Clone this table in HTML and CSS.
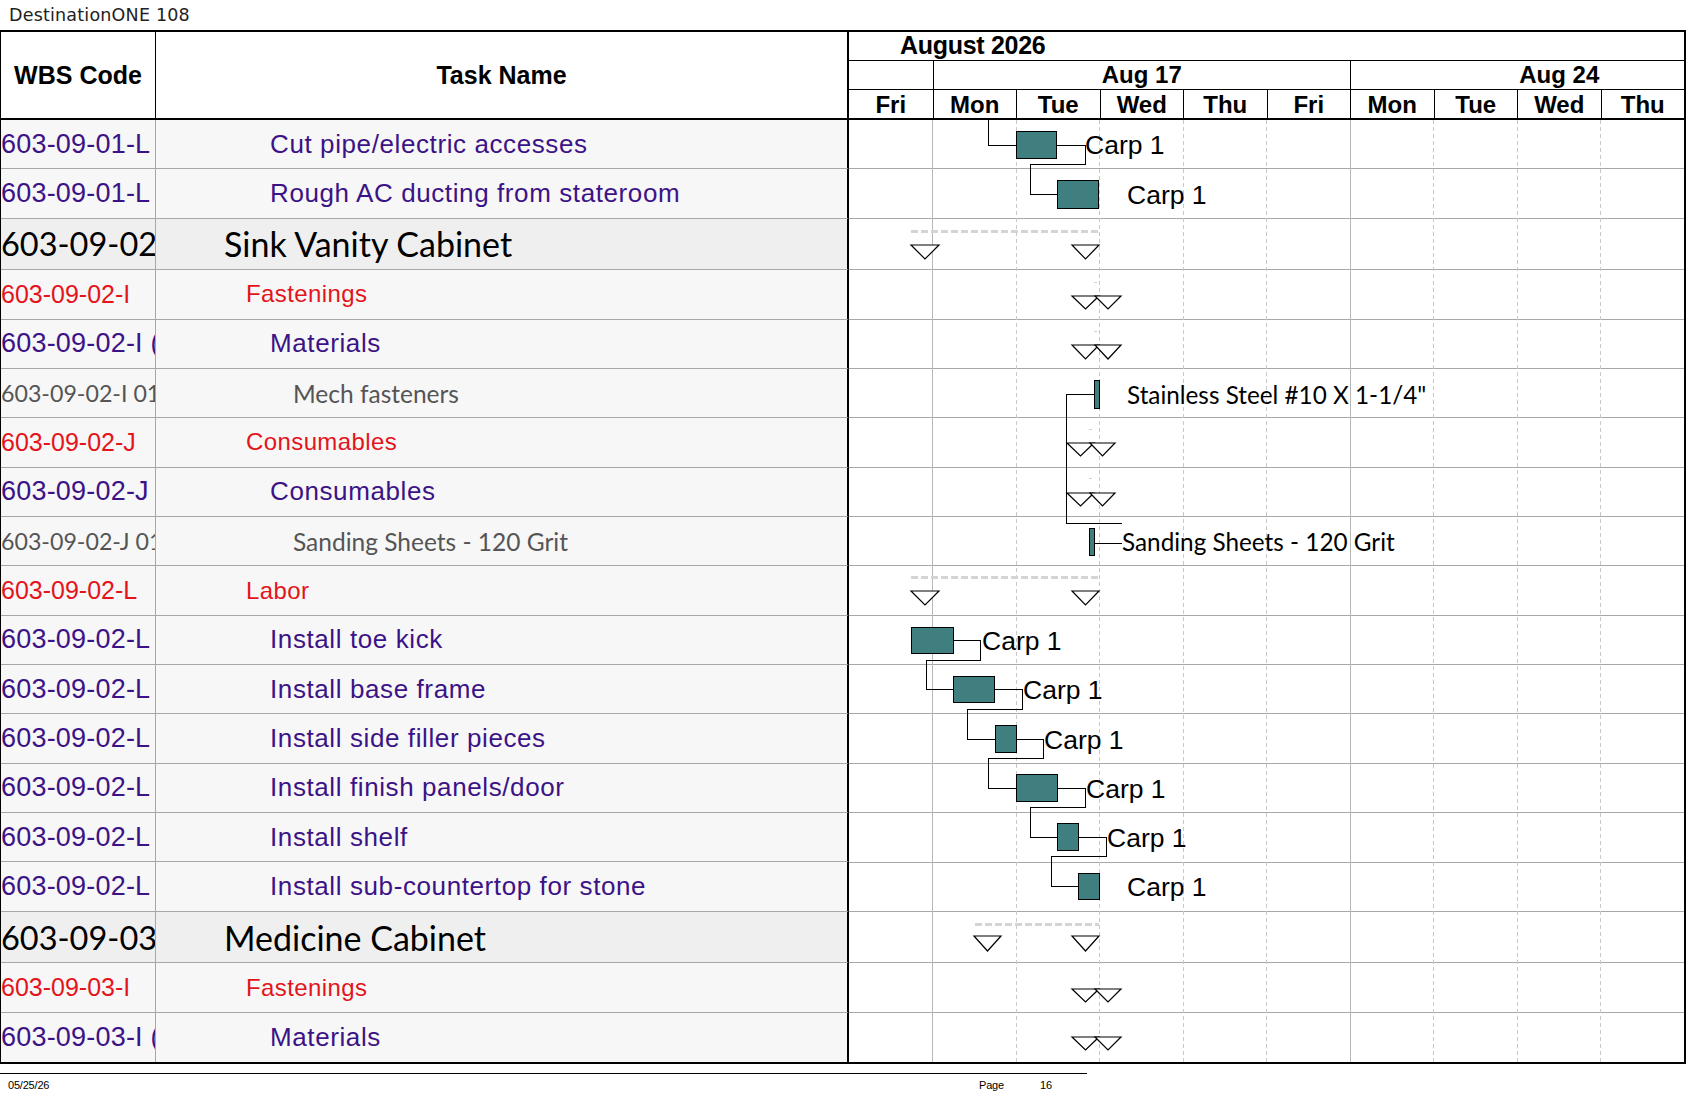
FILE: index.html
```html
<!DOCTYPE html>
<html lang="en">
<head>
<meta charset="utf-8">
<title>DestinationONE 108</title>
<link rel="stylesheet" href="styles.css">
</head>
<body>
<div class="doc-title">DestinationONE 108</div>
<div class="sheet">
  <div class="head">
    <div class="hcell wbs-h">WBS Code</div>
    <div class="hcell task-h">Task Name</div>
    <div class="gantt-h">
      <div class="tier month"><span class="month-label">August 2026</span></div>
      <div class="tier week">
        <div class="wk span1"></div>
        <div class="wk span5">Aug 17</div>
        <div class="wk span5">Aug 24</div>
      </div>
      <div class="tier days">
        <div class="day">Fri</div><div class="day">Mon</div><div class="day">Tue</div><div class="day">Wed</div><div class="day">Thu</div>
        <div class="day">Fri</div><div class="day">Mon</div><div class="day">Tue</div><div class="day">Wed</div><div class="day">Thu</div>
      </div>
    </div>
  </div>
  <div class="body">
    <div class="row blue"><div class="wbs">603-09-01-L</div><div class="task">Cut pipe/electric accesses</div></div>
    <div class="row blue"><div class="wbs">603-09-01-L</div><div class="task">Rough AC ducting from stateroom</div></div>
    <div class="row sum"><div class="wbs">603-09-02</div><div class="task">Sink Vanity Cabinet</div></div>
    <div class="row red"><div class="wbs">603-09-02-I</div><div class="task">Fastenings</div></div>
    <div class="row blue"><div class="wbs">603-09-02-I (01)</div><div class="task">Materials</div></div>
    <div class="row grey"><div class="wbs">603-09-02-I 01.01</div><div class="task">Mech fasteners</div></div>
    <div class="row red"><div class="wbs">603-09-02-J</div><div class="task">Consumables</div></div>
    <div class="row blue"><div class="wbs">603-09-02-J (01)</div><div class="task">Consumables</div></div>
    <div class="row grey"><div class="wbs">603-09-02-J 01.01</div><div class="task">Sanding Sheets - 120 Grit</div></div>
    <div class="row red"><div class="wbs">603-09-02-L</div><div class="task">Labor</div></div>
    <div class="row blue"><div class="wbs">603-09-02-L</div><div class="task">Install toe kick</div></div>
    <div class="row blue"><div class="wbs">603-09-02-L</div><div class="task">Install base frame</div></div>
    <div class="row blue"><div class="wbs">603-09-02-L</div><div class="task">Install side filler pieces</div></div>
    <div class="row blue"><div class="wbs">603-09-02-L</div><div class="task">Install finish panels/door</div></div>
    <div class="row blue"><div class="wbs">603-09-02-L</div><div class="task">Install shelf</div></div>
    <div class="row blue"><div class="wbs">603-09-02-L</div><div class="task">Install sub-countertop for stone</div></div>
    <div class="row sum"><div class="wbs">603-09-03</div><div class="task">Medicine Cabinet</div></div>
    <div class="row red"><div class="wbs">603-09-03-I</div><div class="task">Fastenings</div></div>
    <div class="row blue last"><div class="wbs">603-09-03-I (01)</div><div class="task">Materials</div></div>

    <svg class="chart" width="835" height="942" viewBox="0 0 835 942">
      <g class="hlines">
        <line x1="0" x2="835" y1="48.85" y2="48.85"/>
        <line x1="0" x2="835" y1="98.2" y2="98.2"/>
        <line x1="0" x2="835" y1="149.8" y2="149.8"/>
        <line x1="0" x2="835" y1="199.15" y2="199.15"/>
        <line x1="0" x2="835" y1="248.5" y2="248.5"/>
        <line x1="0" x2="835" y1="297.85" y2="297.85"/>
        <line x1="0" x2="835" y1="347.2" y2="347.2"/>
        <line x1="0" x2="835" y1="396.55" y2="396.55"/>
        <line x1="0" x2="835" y1="445.9" y2="445.9"/>
        <line x1="0" x2="835" y1="495.25" y2="495.25"/>
        <line x1="0" x2="835" y1="544.6" y2="544.6"/>
        <line x1="0" x2="835" y1="593.95" y2="593.95"/>
        <line x1="0" x2="835" y1="643.3" y2="643.3"/>
        <line x1="0" x2="835" y1="692.65" y2="692.65"/>
        <line x1="0" x2="835" y1="742" y2="742"/>
        <line x1="0" x2="835" y1="791.35" y2="791.35"/>
        <line x1="0" x2="835" y1="842.95" y2="842.95"/>
        <line x1="0" x2="835" y1="892.3" y2="892.3"/>
      </g>
      <g class="vsolid">
        <line x1="83.5" x2="83.5" y1="0" y2="942"/>
        <line x1="501" x2="501" y1="0" y2="942"/>
      </g>
      <g class="vdash">
        <line x1="167" x2="167" y1="0" y2="942"/>
        <line x1="250.5" x2="250.5" y1="0" y2="942"/>
        <line x1="334" x2="334" y1="0" y2="942"/>
        <line x1="417.5" x2="417.5" y1="0" y2="942"/>
        <line x1="584.5" x2="584.5" y1="0" y2="942"/>
        <line x1="668" x2="668" y1="0" y2="942"/>
        <line x1="751.5" x2="751.5" y1="0" y2="942"/>
      </g>

      <g class="sumline">
        <line x1="62" x2="250" y1="111" y2="111"/>
        <line x1="62" x2="250" y1="457" y2="457"/>
        <line x1="126" x2="250" y1="804" y2="804"/>
      </g>
      <g class="tick">
        <line x1="245" x2="248" y1="162" y2="162"/>
        <line x1="245" x2="248" y1="211" y2="211"/>
        <line x1="240" x2="243" y1="309" y2="309"/>
        <line x1="240" x2="243" y1="358" y2="358"/>
      </g>

      <g class="link">
        <path d="M139,0 V25 H167.5"/>
        <path d="M207.5,25 H236"/>
        <path d="M236,25 V44 H181 V74 H208.6"/>
        <path d="M245,274 H217 V403 H273"/>
        <path d="M245,423 H273"/>
        <path d="M104,520 H131"/>
        <path d="M131,520 V540 H77 V569 H104"/>
        <path d="M145,569 H173"/>
        <path d="M173,569 V589 H118 V619 H146"/>
        <path d="M167,619 H194"/>
        <path d="M194,619 V638 H139 V668 H167"/>
        <path d="M208,668 H236"/>
        <path d="M236,668 V687 H181 V717 H208"/>
        <path d="M229,717 H257"/>
        <path d="M257,717 V736 H202 V766 H229"/>
      </g>

      <g class="bar">
        <rect x="167.5" y="11" width="40" height="27"/>
        <rect x="208.6" y="60" width="40.4" height="28"/>
        <rect x="245" y="260" width="5" height="28"/>
        <rect x="240" y="408" width="5" height="27"/>
        <rect x="62" y="507" width="42" height="26"/>
        <rect x="104" y="556" width="41" height="26"/>
        <rect x="146" y="605" width="21" height="27"/>
        <rect x="167" y="654" width="41" height="27"/>
        <rect x="208" y="703" width="21" height="27"/>
        <rect x="229" y="753" width="21" height="26"/>
      </g>

      <g class="ms">
        <polygon points="62,125 90,125 76,139"/>
        <polygon points="223,125 250,125 236.5,139"/>
        <polygon points="223,176 250,176 236.5,189"/>
        <polygon points="246,176 272,176 259,189"/>
        <polygon points="223,225 250,225 236.5,239"/>
        <polygon points="246,225 272,225 259,239"/>
        <polygon points="218,323 245,323 231.5,336"/>
        <polygon points="241,323 266,323 253.5,336"/>
        <polygon points="218,373 245,373 231.5,386"/>
        <polygon points="241,373 266,373 253.5,386"/>
        <polygon points="62,471 90,471 76,485"/>
        <polygon points="223,471 250,471 236.5,485"/>
        <polygon points="125,816 152,816 138.5,831"/>
        <polygon points="223,816 250,816 236.5,831"/>
        <polygon points="223,869 250,869 236.5,882"/>
        <polygon points="246,869 272,869 259,882"/>
        <polygon points="223,917 250,917 236.5,930"/>
        <polygon points="246,917 272,917 259,930"/>
      </g>

      <g class="lbl">
        <text x="236" y="34">Carp 1</text>
        <text x="278" y="83.5">Carp 1</text>
        <text x="133" y="529.5">Carp 1</text>
        <text x="174" y="578.5">Carp 1</text>
        <text x="195" y="628.5">Carp 1</text>
        <text x="237" y="677.5">Carp 1</text>
        <text x="258" y="726.5">Carp 1</text>
        <text x="278" y="775.5">Carp 1</text>
      </g>
      <g class="lbl2">
        <text x="278" y="284">Stainless Steel #10 X 1-1/4"</text>
        <text x="273" y="430.5">Sanding Sheets - 120 Grit</text>
      </g>
    </svg>
  </div>
</div>
<div class="footer">
  <span class="f-date">05/25/26</span>
  <span class="f-page">Page</span>
  <span class="f-num">16</span>
</div>
</body>
</html>
```

FILE: styles.css
```css
* { box-sizing: border-box; }
html, body { margin: 0; padding: 0; background: #fff; }
body {
  width: 1687px;
  height: 1097px;
  overflow: hidden;
  font-family: "Liberation Sans", Arial, sans-serif;
  color: #000;
}

.doc-title {
  height: 30px;
  padding-left: 9px;
  font-family: "DejaVu Sans", sans-serif;
  font-size: 17.5px;
  line-height: 30px;
  letter-spacing: 0.2px;
  color: #222;
}

.sheet {
  width: 1686px;
  border-style: solid;
  border-color: #000;
  border-width: 2px 2px 2px 1px;
}

/* header */
.head {
  display: grid;
  grid-template-columns: 155px 693px 835px;
  height: 88px;
  border-bottom: 2px solid #000;
}
.hcell {
  display: flex;
  align-items: center;
  justify-content: center;
  font-weight: bold;
  font-size: 25px;
}
.wbs-h { border-right: 1px solid #000; }
.task-h { border-right: 2px solid #000; }

.gantt-h {
  display: flex;
  flex-direction: column;
  overflow: hidden;
  font-weight: bold;
  font-size: 24px;
  white-space: nowrap;
}
.tier {
  height: 29px;
  border-bottom: 1px solid #000;
}
.month { display: flex; align-items: center; padding-bottom: 1px; }
.month-label { padding-left: 51px; font-size: 25px; letter-spacing: -0.3px; }
.week {
  display: grid;
  grid-template-columns: repeat(11, 83.5px);
}
.wk { text-align: center; line-height: 28px; }
.wk + .wk { border-left: 1px solid #000; }
.span1 { grid-column: span 1; }
.span5 { grid-column: span 5; }
.days {
  height: 28px;
  border-bottom: none;
  display: grid;
  grid-template-columns: repeat(10, 1fr);
  grid-template-rows: 28px;
}
.day { text-align: center; line-height: 26px; padding-top: 2px; }
.day + .day { border-left: 1px solid #000; }

/* body */
.body {
  display: grid;
  grid-template-columns: 155px 693px 835px;
  grid-template-rows: repeat(2, 49.35px) 51.6px repeat(13, 49.35px) 51.6px repeat(2, 49.35px);
}
.row { display: contents; }
.wbs, .task {
  display: flex;
  align-items: center;
  white-space: nowrap;
  overflow: hidden;
  background: #f7f7f7;
  border-bottom: 1px solid #a8a8a8;
}
.wbs { grid-column: 1; border-right: 1px solid #a8a8a8; }
.task { grid-column: 2; border-right: 2px solid #000; }
.last .wbs, .last .task { border-bottom: none; }

.blue { color: #3c1386; }
.blue .wbs { font-size: 27px; letter-spacing: 0.2px; }
.blue .task { font-size: 26px; letter-spacing: 0.6px; padding-left: 114px; }

.red { color: #e3141b; }
.red .wbs { font-size: 25px; letter-spacing: 0; }
.red .task { font-size: 24px; letter-spacing: 0.4px; padding-left: 90px; }

.grey { color: #555; font-family: Lato, "Open Sans", sans-serif; }
.grey .wbs { font-size: 23.2px; }
.grey .task { font-size: 24.5px; padding-left: 137px; }

.sum { color: #000; font-family: Lato, "Open Sans", sans-serif; }
.sum .wbs, .sum .task { background: #efefef; font-size: 34px; }
.sum .wbs { font-size: 32.5px; }
.sum .task { padding-left: 68px; }

/* chart */
.chart {
  grid-column: 3;
  grid-row: 1 / -1;
  display: block;
  background: #fff;
  shape-rendering: crispEdges;
}
.hlines line { stroke: #a8a8a8; stroke-width: 1; }
.vsolid line { stroke: #b8b8b8; stroke-width: 1; }
.vdash line { stroke: #c8c8c8; stroke-width: 1; stroke-dasharray: 4 3; }
.sumline line { stroke: #d4d4d4; stroke-width: 3; stroke-dasharray: 7 3; }
.tick line { stroke: #d0d0d0; stroke-width: 1; }
.link path { fill: none; stroke: #000; stroke-width: 1; }
.bar rect { fill: #3f7f80; stroke: #000; stroke-width: 1; }
.ms polygon { fill: #fff; stroke: #000; stroke-width: 1.2; shape-rendering: geometricPrecision; }
.lbl text {
  font-family: "Liberation Sans", Arial, sans-serif;
  font-size: 26.5px;
  fill: #000;
}
.lbl2 text {
  font-family: Lato, "Open Sans", sans-serif;
  font-size: 24.3px;
  fill: #000;
}

/* footer */
.footer {
  width: 1087px;
  margin-top: 9px;
  border-top: 1px solid #000;
  padding-top: 5px;
  display: flex;
  font-size: 11px;
  letter-spacing: -0.2px;
  color: #000;
}
.f-date { width: 979px; padding-left: 8px; }
.f-page { width: 61px; }
```
